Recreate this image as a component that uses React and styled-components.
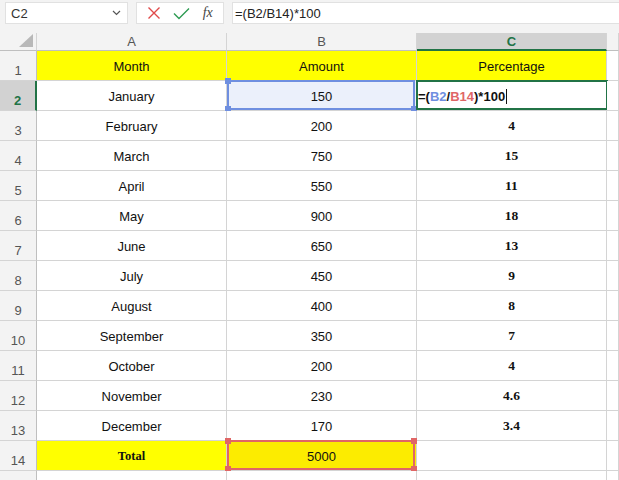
import React from 'react';
import styled, { createGlobalStyle, css } from 'styled-components';

const GlobalStyle = createGlobalStyle`
  html, body {
    margin: 0;
    padding: 0;
    background: #ffffff;
  }
  body {
    font-family: "Liberation Sans", Arial, sans-serif;
    overflow: hidden;
  }
`;

const Sheet = styled.div`
  width: 619px;
  height: 480px;
  overflow: hidden;
  background: #ffffff;
`;

const Toolbar = styled.div`
  height: 33px;
  background: #f3f3f3;
  display: flex;
  align-items: flex-start;
  padding: 2px 0 0 5px;
  box-sizing: border-box;
  gap: 8px;
`;

const NameBox = styled.div`
  width: 123px;
  height: 22px;
  box-sizing: border-box;
  background: #ffffff;
  border: 1px solid #e1e1e1;
  display: flex;
  align-items: center;
  justify-content: space-between;
  padding: 0 6px 0 5px;
  font-size: 13px;
  color: #333;
`;

const FnBox = styled.div`
  width: 88px;
  height: 22px;
  box-sizing: border-box;
  background: #ffffff;
  border: 1px solid #e1e1e1;
  display: flex;
  align-items: center;
  justify-content: space-around;
  padding: 0 4px;
`;

const Fx = styled.span`
  font-family: "Liberation Serif", "Times New Roman", serif;
  font-style: italic;
  font-size: 14px;
  color: #444;
`;

const FormulaInput = styled.div`
  flex: 1;
  height: 22px;
  box-sizing: border-box;
  background: #ffffff;
  border: 1px solid #e1e1e1;
  border-right: none;
  display: flex;
  align-items: center;
  padding-left: 2px;
  font-size: 13px;
  color: #222;
`;

const Grid = styled.div`
  display: grid;
  grid-template-columns: 37px 190px 190px 190px 12px;
  grid-template-rows: 18px repeat(15, 30px);
`;

const Corner = styled.div`
  position: relative;
  background: #f3f3f3;
  border-right: 1px solid #d4d4d4;
  border-bottom: 1px solid #bfbfbf;
  box-sizing: border-box;
  &::after {
    content: '';
    position: absolute;
    right: 3px;
    bottom: 3px;
    width: 0;
    height: 0;
    border-left: 14px solid transparent;
    border-bottom: 13px solid #b8b8b8;
  }
`;

const ColHead = styled.div`
  background: ${p => (p.$active ? '#d2d2d2' : '#f3f3f3')};
  border-right: 1px solid #d4d4d4;
  border-bottom: ${p => (p.$active ? '2px solid #217346' : '1px solid #bfbfbf')};
  box-sizing: border-box;
  display: flex;
  align-items: center;
  justify-content: center;
  font-size: 13px;
  color: ${p => (p.$active ? '#217346' : '#555')};
  font-weight: ${p => (p.$active ? 700 : 400)};
`;

const RowHead = styled.div`
  background: ${p => (p.$active ? '#d2d2d2' : '#f3f3f3')};
  border-right: ${p => (p.$active ? '2px solid #217346' : '1px solid #bfbfbf')};
  border-bottom: 1px solid #d4d4d4;
  box-sizing: border-box;
  display: flex;
  align-items: flex-end;
  justify-content: center;
  padding-bottom: 2px;
  font-size: 13px;
  color: ${p => (p.$active ? '#217346' : '#555')};
  font-weight: ${p => (p.$active ? 700 : 400)};
`;

const Cell = styled.div`
  position: relative;
  border-right: 1px solid #d4d4d4;
  border-bottom: 1px solid #d4d4d4;
  box-sizing: border-box;
  display: flex;
  align-items: center;
  justify-content: ${p => (p.$left ? 'flex-start' : 'center')};
  padding-top: 1px;
  font-size: 13px;
  color: #111;
  background: ${p => p.$bg || '#ffffff'};
  white-space: nowrap;
  ${p => p.$serif && css`
    font-family: "Liberation Serif", "Times New Roman", serif;
    font-weight: 700;
    font-size: ${p.$serif}px;
  `}
`;

const RangeBox = styled.div`
  position: absolute;
  left: 0;
  top: -1px;
  right: 1px;
  bottom: 0;
  border: 2px solid ${p => p.$color};
  pointer-events: none;
`;

const Handle = styled.span`
  position: absolute;
  width: 6px;
  height: 6px;
  background: ${p => p.$color};
  ${p => (p.$top ? 'top: -4px;' : 'bottom: -4px;')}
  ${p => (p.$leftSide ? 'left: -4px;' : 'right: -4px;')}
`;

const ActiveBox = styled.div`
  position: absolute;
  left: -1px;
  top: -1px;
  right: -2px;
  bottom: 0;
  border: 2px solid #217346;
  pointer-events: none;
`;

const FormulaEdit = styled.span`
  font-weight: 700;
  font-size: 13px;
  color: #111;
  padding-left: 1px;
  .ref1 { color: #6f8fe0; }
  .ref2 { color: #e06666; }
  .caret {
    display: inline-block;
    width: 1px;
    height: 15px;
    background: #111;
    vertical-align: -3px;
    margin-left: 1px;
  }
`;

const rows = [
  ['January', '150', null],
  ['February', '200', '4'],
  ['March', '750', '15'],
  ['April', '550', '11'],
  ['May', '900', '18'],
  ['June', '650', '13'],
  ['July', '450', '9'],
  ['August', '400', '8'],
  ['September', '350', '7'],
  ['October', '200', '4'],
  ['November', '230', '4.6'],
  ['December', '170', '3.4'],
];

const Range = ({ color, handles }) => (
  <RangeBox $color={color}>
    {handles.map(([top, leftSide], i) => (
      <Handle key={i} $color={color} $top={top} $leftSide={leftSide} />
    ))}
  </RangeBox>
);

const App = () => {
  return (
    <Sheet>
      <GlobalStyle />
      <Toolbar>
        <NameBox>
          <span>C2</span>
          <svg width="9" height="6" viewBox="0 0 9 6">
            <path d="M1 1l3.5 3.5L8 1" fill="none" stroke="#555" strokeWidth="1.2" />
          </svg>
        </NameBox>
        <FnBox>
          <svg width="14" height="14" viewBox="0 0 14 14">
            <path d="M1.5 1.5l11 11M12.5 1.5l-11 11" stroke="#e04a4a" strokeWidth="1.4" />
          </svg>
          <svg width="17" height="13" viewBox="0 0 17 13">
            <path d="M1 6.5l5 5L16 1.5" fill="none" stroke="#2e9b53" strokeWidth="1.4" />
          </svg>
          <Fx>fx</Fx>
        </FnBox>
        <FormulaInput>=(B2/B14)*100</FormulaInput>
      </Toolbar>

      <Grid>
        <Corner />
        <ColHead>A</ColHead>
        <ColHead>B</ColHead>
        <ColHead $active>C</ColHead>
        <ColHead />

        <RowHead>1</RowHead>
        <Cell $bg="#ffff00">Month</Cell>
        <Cell $bg="#ffff00">Amount</Cell>
        <Cell $bg="#ffff00">Percentage</Cell>
        <Cell />

        {rows.map(([month, amount, pct], i) => {
          const n = i + 2;
          const first = n === 2;
          return (
            <React.Fragment key={n}>
              <RowHead $active={first}>{n}</RowHead>
              <Cell>{month}</Cell>
              <Cell $bg={first ? '#ebf0fb' : undefined}>
                {amount}
                {first && (
                  <Range color="#6f8fe0" handles={[[true, true], [false, true], [false, false]]} />
                )}
              </Cell>
              {first ? (
                <Cell $left>
                  <FormulaEdit>
                    =(<span className="ref1">B2</span>/<span className="ref2">B14</span>)*100
                    <span className="caret" />
                  </FormulaEdit>
                  <ActiveBox />
                </Cell>
              ) : (
                <Cell $serif={13.5}>{pct}</Cell>
              )}
              <Cell />
            </React.Fragment>
          );
        })}

        <RowHead>14</RowHead>
        <Cell $bg="#ffff00" $serif={12.5}>Total</Cell>
        <Cell $bg="#fcec00">
          5000
          <Range color="#e06666" handles={[[true, true], [true, false], [false, true], [false, false]]} />
        </Cell>
        <Cell />
        <Cell />

        <RowHead />
        <Cell />
        <Cell />
        <Cell />
        <Cell />
      </Grid>
    </Sheet>
  );
};

export default App;
